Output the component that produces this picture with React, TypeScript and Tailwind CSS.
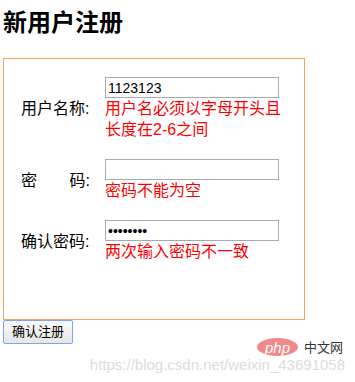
export default function App() {
  const font = { fontFamily: '"Liberation Sans", "Noto Sans CJK SC", sans-serif' };
  return (
    <div className="relative h-[382px] w-[355px] overflow-hidden bg-white text-black" style={font}>
      <h1 className="ml-[3px] pt-[6px] text-[24px] font-bold leading-[33px]">新用户注册</h1>

      <div className="ml-[3px] mt-[19px] h-[262px] w-[302px] border border-[#f4a460] pl-[17px] pt-[18px]">
        <div className="flex flex-col gap-[19px] text-[16px] leading-[21px]">
          <div className="flex items-center gap-[15px]">
            <div className="w-[69px]">用户名称:</div>
            <div className="w-[176px]">
              <input
                readOnly
                value="1123123"
                className="block h-[21px] w-[174px] border border-[#a9a9a9] px-[2px] text-[14px] leading-[19px] outline-none"
              />
              <div className="text-[#ff0000]">用户名必须以字母开头且长度在2-6之间</div>
            </div>
          </div>

          <div className="flex items-center gap-[15px]">
            <div className="flex w-[69px] justify-between">
              <span>密</span>
              <span>码:</span>
            </div>
            <div className="w-[176px]">
              <input
                readOnly
                type="password"
                value=""
                className="block h-[21px] w-[174px] border border-[#a9a9a9] px-[2px] text-[14px] leading-[19px] outline-none"
              />
              <div className="text-[#ff0000]">密码不能为空</div>
            </div>
          </div>

          <div className="flex items-center gap-[15px]">
            <div className="w-[69px]">确认密码:</div>
            <div className="w-[176px]">
              <input
                readOnly
                type="password"
                value="12345678"
                className="block h-[21px] w-[174px] border border-[#a9a9a9] px-[2px] text-[14px] leading-[19px] outline-none"
              />
              <div className="text-[#ff0000]">两次输入密码不一致</div>
            </div>
          </div>
        </div>
      </div>

      <button className="ml-[3px] block h-[24px] w-[70px] rounded-[2px] border border-[#7aa7e6] bg-gradient-to-b from-[#fafafa] to-[#e6e6e6] text-[13px] leading-[20px]">
        确认注册
      </button>

      {/* watermark */}
      <div className="absolute right-[12px] top-[338px] flex items-center gap-[6px]">
        <div className="flex h-[18px] w-[41px] items-center justify-center rounded-[50%] bg-[#f08a8a] text-[15px] italic leading-none text-white">
          php
        </div>
        <span className="text-[13px] leading-none text-[#333]">中文网</span>
      </div>
      <div className="absolute right-[10px] top-[357px] text-[15px] leading-[15px] text-[#dcdcdc]">
        https://blog.csdn.net/weixin_43691058
      </div>
    </div>
  );
}
